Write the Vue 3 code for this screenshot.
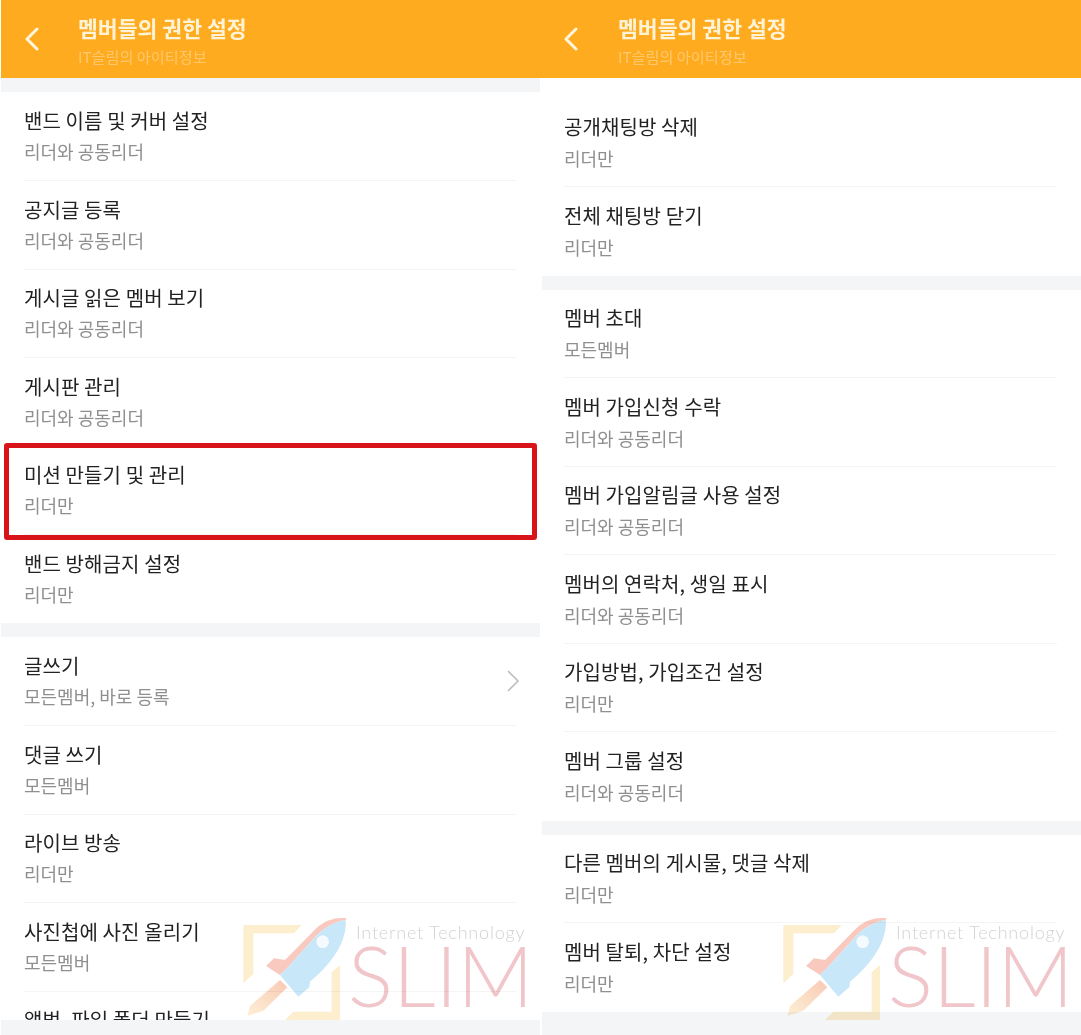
<script setup>
const leader = '리더만'
const both = '리더와 공동리더'
const all = '모든멤버'

const panels = [
  {
    id: 'left',
    sections: [
      [
        { title: '밴드 이름 및 커버 설정', sub: both },
        { title: '공지글 등록', sub: both },
        { title: '게시글 읽은 멤버 보기', sub: both },
        { title: '게시판 관리', sub: both },
        { title: '미션 만들기 및 관리', sub: leader },
        { title: '밴드 방해금지 설정', sub: leader }
      ],
      [
        { title: '글쓰기', sub: '모든멤버, 바로 등록', arrow: true },
        { title: '댓글 쓰기', sub: all },
        { title: '라이브 방송', sub: leader },
        { title: '사진첩에 사진 올리기', sub: all },
        { title: '앨범, 파일 폴더 만들기', sub: '' }
      ]
    ]
  },
  {
    id: 'right',
    sections: [
      [
        { title: '공개채팅방 삭제', sub: leader },
        { title: '전체 채팅방 닫기', sub: leader }
      ],
      [
        { title: '멤버 초대', sub: all },
        { title: '멤버 가입신청 수락', sub: both },
        { title: '멤버 가입알림글 사용 설정', sub: both },
        { title: '멤버의 연락처, 생일 표시', sub: both },
        { title: '가입방법, 가입조건 설정', sub: leader },
        { title: '멤버 그룹 설정', sub: both }
      ],
      [
        { title: '다른 멤버의 게시물, 댓글 삭제', sub: leader },
        { title: '멤버 탈퇴, 차단 설정', sub: leader }
      ]
    ]
  }
]
</script>

<template>
  <div class="page">
    <div v-for="panel in panels" :key="panel.id" class="panel" :class="`panel-${panel.id}`">
      <header class="top-bar">
        <svg class="back" width="15" height="24" viewBox="0 0 15 24">
          <path d="M12 2 L2 12 L12 22" fill="none" stroke="#fff4dc" stroke-width="3" stroke-linecap="round" stroke-linejoin="round" />
        </svg>
        <div class="top-text">
          <div class="top-title">멤버들의 권한 설정</div>
          <div class="top-sub">IT슬림의 아이티정보</div>
        </div>
      </header>

      <div class="list">
        <div class="list-start"></div>
        <section v-for="(section, i) in panel.sections" :key="i" class="section">
          <div v-for="item in section" :key="item.title" class="item">
            <div class="item-inner">
              <div class="item-text">
                <div class="item-title">{{ item.title }}</div>
                <div v-if="item.sub" class="item-sub">{{ item.sub }}</div>
              </div>
              <svg v-if="item.arrow" class="arrow" width="14" height="24" viewBox="0 0 14 24">
                <path d="M2 2 L12 12 L2 22" fill="none" stroke="#bdbdbd" stroke-width="1.6" />
              </svg>
            </div>
          </div>
        </section>
      </div>
      <div class="list-end"></div>

      <div v-if="panel.id === 'left'" class="highlight"></div>

      <div class="watermark">
        <svg class="mark" width="120" height="135" viewBox="0 0 360 405">
          <defs>
            <linearGradient :id="`flame-${panel.id}`" x1="1" y1="0" x2="0" y2="1">
              <stop offset="0" stop-color="#f9c9b4" />
              <stop offset="1" stop-color="#fdf0d6" />
            </linearGradient>
          </defs>
          <path d="M40 75 H215 L192 100 H70 V222 L40 250 Z" fill="#fdeecd" />
          <path d="M330 195 V360 H165 L190 335 H305 V217 Z" fill="#fdeecd" />
          <path d="M150 240 L60 318 L52 348 L100 332 L172 262 Z" :fill="`url(#flame-${panel.id})`" />
          <path d="M350 55 C320 50 285 60 262 82 L165 180 L132 175 L108 198 L150 225 L175 200 L258 108 C280 85 315 65 347 60 Z" fill="#f9c9c0" />
          <path d="M347 60 C352 110 320 180 240 245 L238 262 L205 290 L150 225 L175 200 L258 108 C280 85 315 65 347 60 Z" fill="#c8e7f9" />
          <circle cx="278" cy="125" r="19" fill="#f4fafe" />
        </svg>
        <div class="mark-text">
          <div class="mark-small">Internet Technology</div>
          <div class="mark-big">SLIM</div>
        </div>
      </div>
    </div>
  </div>
</template>

<style scoped>
.page {
  display: grid;
  grid-template-columns: 540px 541px;
  width: 1081px;
  height: 1035px;
  overflow: hidden;
  background: #fff;
  font-family: "Noto Sans CJK KR", "Noto Sans", sans-serif;
}
.panel {
  position: relative;
  display: flex;
  flex-direction: column;
  height: 1035px;
  overflow: hidden;
}
.panel-left {
  padding-left: 1px;
}
.top-bar {
  flex: none;
  display: flex;
  align-items: flex-start;
  gap: 38px;
  height: 78px;
  padding-left: 24px;
  background: #ffab1f;
}
.panel-right .top-bar {
  gap: 39px;
}
.back {
  margin-top: 27px;
}
.top-text {
  padding-top: 12px;
}
.top-title {
  font-size: 21.6px;
  line-height: 32px;
  font-weight: 700;
  color: #fff3d6;
}
.top-sub {
  font-size: 15.2px;
  line-height: 20px;
  margin-top: 2px;
  color: rgba(255, 255, 255, .35);
}
.list {
  flex: 1;
  min-height: 0;
  overflow: hidden;
  background: #f4f5f7;
}
.panel-left .list-start {
  height: 14px;
}
.panel-right .list {
  margin-left: 2px;
}
.panel-right .list-start {
  height: 21px;
  background: #fff;
}
.section {
  background: #fff;
  margin-bottom: 14px;
}
.item {
  height: 88.5px;
  padding: 0 24px 0 23px;
}
.panel-right .item {
  padding-left: 22px;
}
.item-inner {
  display: flex;
  align-items: center;
  justify-content: space-between;
  box-sizing: border-box;
  height: 89px;
  border-bottom: 1px solid #f4f4f4;
}
.panel-right .item-inner {
  height: 88px;
}
.item:last-child .item-inner {
  border-bottom: none;
}
.item-text {
  align-self: flex-start;
  padding-top: 15px;
}
.panel-right .item-text {
  padding-top: 14px;
}
.item-title {
  font-size: 20px;
  line-height: 28px;
  color: #222;
  letter-spacing: .1px;
}
.item-sub {
  font-size: 18px;
  line-height: 28px;
  margin-top: 2px;
  color: #8f8f8f;
}
.panel-right .item-sub {
  margin-top: 3px;
}
.arrow {
  margin-right: -4px;
}
.list-end {
  flex: none;
  height: 15px;
  background: #f4f5f7;
}
.panel-right .list-end {
  margin-left: 2px;
  height: 10px;
}
.highlight {
  position: absolute;
  left: 4px;
  top: 443px;
  width: 533px;
  height: 97px;
  box-sizing: border-box;
  border: 5px solid #d9131a;
  border-radius: 3px;
}
.watermark {
  position: absolute;
  left: 230px;
  top: 900px;
  width: 300px;
  height: 135px;
  mix-blend-mode: multiply;
}
.mark {
  position: absolute;
  left: 0;
  top: 0;
}
.mark-text {
  position: absolute;
  left: 118px;
  top: 20px;
  width: 180px;
  font-family: Lato, "Open Sans", sans-serif;
  font-weight: 300;
}
.mark-small {
  font-size: 18px;
  line-height: 24px;
  letter-spacing: .8px;
  padding-left: 8px;
  color: #d2d2d2;
  white-space: nowrap;
}
.mark-big {
  font-size: 84px;
  line-height: 62px;
  letter-spacing: 0;
  color: #f1c6ca;
  white-space: nowrap;
}
</style>
